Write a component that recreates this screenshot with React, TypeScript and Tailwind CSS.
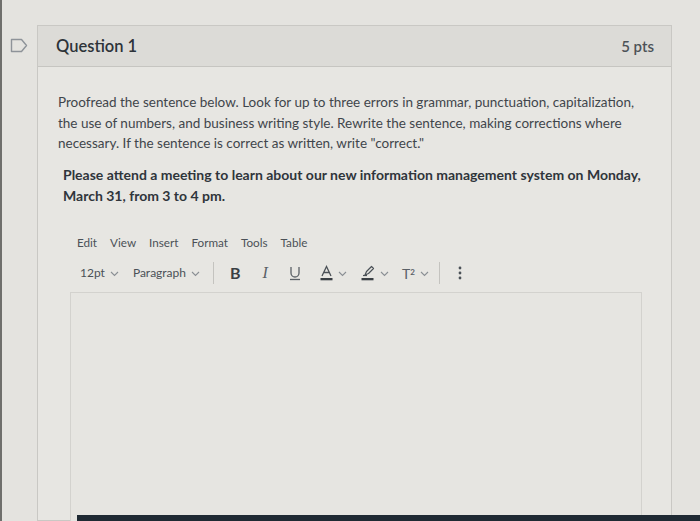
import React from "react";

const Chevron = () => (
  <svg width="9" height="6" viewBox="0 0 9 6" className="ml-[5px] mt-[1px]">
    <path d="M1 1l3.5 3.5L8 1" fill="none" stroke="#8a8f94" strokeWidth="1.1" />
  </svg>
);

export default function App() {
  return (
    <div
      className="relative w-[700px] h-[521px] overflow-hidden bg-[#e4e3df] text-[#3b4046]"
      style={{ fontFamily: "Lato, 'Noto Sans', sans-serif" }}
    >
      <div className="absolute left-0 top-0 h-full w-[2px] bg-[#6f6f6c]" />
      <div className="flex pt-[25px]">
        {/* flag */}
        <div className="w-[37px] shrink-0 flex justify-center pt-[13px]">
          <svg width="18" height="15" viewBox="0 0 18 15">
            <path d="M1.5 1.5h10l5 6-5 6h-10z" fill="none" stroke="#8e9399" strokeWidth="1.4" strokeLinejoin="round" />
          </svg>
        </div>
        {/* card */}
        <div className="w-[635px] h-[496px] shrink-0 border border-[#c9c8c4] bg-[#e7e6e2] flex flex-col">
          <div className="h-[41px] shrink-0 bg-[#dcdbd7] border-b border-[#c6c5c1] flex items-center justify-between pl-[18px] pr-[17px]">
            <span className="text-[16.5px] text-[#2d3339] font-semibold">Question 1</span>
            <span className="text-[15px] text-[#4c5257] font-semibold">5 pts</span>
          </div>
          <div className="pl-[20px] pt-[25px] pr-[20px]">
            <p className="text-[13.5px] leading-[20.5px] text-[#3f454b] whitespace-nowrap">
              Proofread the sentence below. Look for up to three errors in grammar, punctuation, capitalization,
              <br />
              the use of numbers, and business writing style. Rewrite the sentence, making corrections where
              <br />
              necessary. If the sentence is correct as written, write "correct."
            </p>
            <p className="mt-[10px] ml-[5px] text-[14px] leading-[21px] font-bold text-[#2f353b] whitespace-nowrap">
              Please attend a meeting to learn about our new information management system on Monday,
              <br />
              March 31, from 3 to 4 pm.
            </p>
            <div className="mt-[28px] ml-[19px] flex gap-[13px] text-[11.7px] text-[#4b5157]">
              <span>Edit</span>
              <span>View</span>
              <span>Insert</span>
              <span>Format</span>
              <span>Tools</span>
              <span>Table</span>
            </div>
            <div className="mt-[10px] ml-[22px] h-[24px] flex items-center text-[12px] text-[#4b5157]">
              <span className="flex items-center">12pt<Chevron /></span>
              <span className="flex items-center ml-[14px]">Paragraph<Chevron /></span>
              <span className="ml-[13px] w-px h-[22px] bg-[#c4c3bf]" />
              <span className="ml-[16px] text-[16px] font-bold text-[#3a3f44]">B</span>
              <span className="ml-[22px] text-[16px] italic text-[#5a6066]" style={{ fontFamily: "'Liberation Serif', serif" }}>I</span>
              <svg className="ml-[21px]" width="12" height="16" viewBox="0 0 12 16">
                <path d="M2 2v6a4 4 0 0 0 8 0V2" fill="none" stroke="#5a6066" strokeWidth="1.3" />
                <path d="M1 14.5h10" stroke="#5a6066" strokeWidth="1.3" />
              </svg>
              <span className="ml-[19px] flex items-center">
                <svg width="13" height="16" viewBox="0 0 13 16">
                  <path d="M2 11L6.5 1.5 11 11M3.6 7.5h5.8" fill="none" stroke="#4b5157" strokeWidth="1.3" />
                  <rect x="0.5" y="13" width="12" height="2.3" fill="#3a3f44" />
                </svg>
                <Chevron />
              </span>
              <span className="ml-[14px] flex items-center">
                <svg width="14" height="16" viewBox="0 0 14 16">
                  <path d="M4 10l1.5-3.5L10.5 1.5l2 2L7.5 8.5 4 10z" fill="none" stroke="#4b5157" strokeWidth="1.2" strokeLinejoin="round" />
                  <path d="M2 10.5h4" stroke="#4b5157" strokeWidth="1.2" />
                  <rect x="0.5" y="13" width="12" height="2.3" fill="#3a3f44" />
                </svg>
                <Chevron />
              </span>
              <span className="ml-[13px] flex items-center">
                <span className="text-[14px] text-[#5a6066]">
                  T<sup className="text-[8px] font-bold">2</sup>
                </span>
                <Chevron />
              </span>
              <span className="ml-[10px] w-px h-[22px] bg-[#c4c3bf]" />
              <svg className="ml-[18px]" width="4" height="14" viewBox="0 0 4 14">
                <circle cx="2" cy="2" r="1.4" fill="#4b5157" />
                <circle cx="2" cy="7" r="1.4" fill="#4b5157" />
                <circle cx="2" cy="12" r="1.4" fill="#4b5157" />
              </svg>
            </div>
            <div className="mt-[7px] ml-[12px] w-[572px] h-[230px] border border-[#d3d2ce] bg-[#e6e5e1]" />
          </div>
        </div>
      </div>
      <div className="absolute left-[77px] right-0 bottom-0 h-[6px] bg-[#1f2a33]" />
    </div>
  );
}
